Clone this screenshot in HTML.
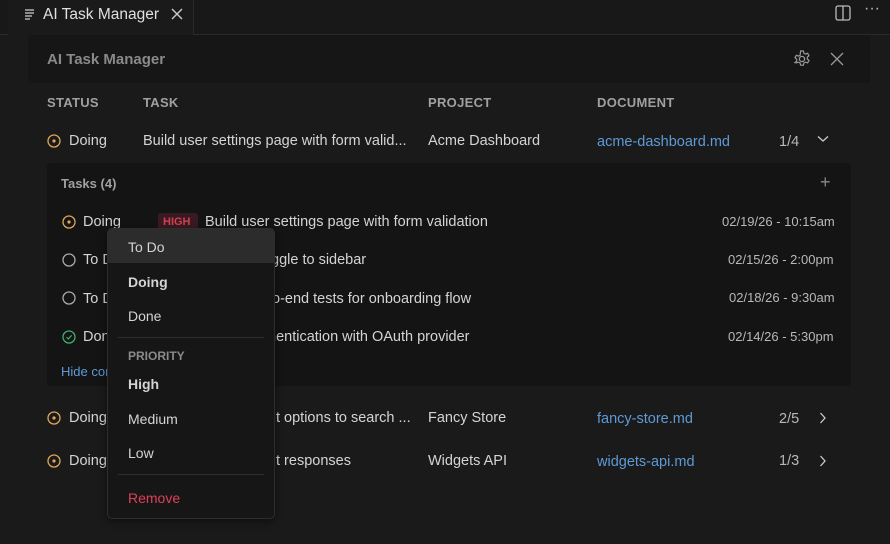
<!DOCTYPE html>
<html><head><style>
*{margin:0;padding:0;box-sizing:border-box}
body{width:890px;height:544px;background:#1a1a1a;font-family:"Liberation Sans",sans-serif;font-size:14.5px;color:#d4d4d4;position:relative;overflow:hidden}
.abs{position:absolute;white-space:nowrap}
.top{position:absolute;left:0;top:0;width:890px;height:35px;background:#181818;border-bottom:1px solid #2a2a2a}
.tab{position:absolute;left:8px;top:0;width:186px;height:35px;background:#1a1a1a;border-right:1px solid #2b2b2b}
.hdr{position:absolute;left:28px;top:35px;width:842px;height:48px;background:#161616}
.th{font-size:13px;font-weight:bold;color:#a0a0a0;letter-spacing:.3px}
.inner{position:absolute;left:47px;top:163px;width:804px;height:223px;background:#141414;border-radius:4px}
.menu{position:absolute;left:107px;top:228px;width:168px;height:291px;background:#161616;border:1px solid #2e2e2e;border-radius:5px;box-shadow:0 2px 8px rgba(0,0,0,.5)}
.mi{position:absolute;left:20px;font-size:14px;color:#d4d4d4}
.sep{position:absolute;left:10px;width:146px;height:1px;background:#2e2e2e}
.link{color:#5e9ad6}
.dim{color:#b8b8b8}
</style></head><body>
<div class="top"></div>
<div class="tab"></div>
<svg class="abs" style="left:24px;top:8px" width="12" height="12" viewBox="0 0 12 12"><g stroke="#c8c8c8" stroke-width="1.3"><line x1="1" y1="2" x2="10" y2="2"/><line x1="1" y1="5" x2="10" y2="5"/><line x1="1" y1="8" x2="8" y2="8"/><line x1="1" y1="11" x2="6" y2="11"/></g></svg>
<div class="abs" style="left:43px;top:6px;font-size:15.5px;color:#e0e0e0">AI Task Manager</div>
<svg class="abs" style="left:171px;top:8px" width="12" height="12"><path d="M1 1L11 11M11 1L1 11" stroke="#ccc" stroke-width="1.4"/></svg>
<svg class="abs" style="left:835px;top:5px" width="16" height="16"><rect x="1" y="1" width="14" height="14" rx="2" fill="none" stroke="#bbb" stroke-width="1.3"/><line x1="8" y1="1" x2="8" y2="15" stroke="#bbb" stroke-width="1.3"/></svg>
<div class="abs" style="left:864px;top:0px;font-size:16px;color:#bbb">···</div>
<div class="hdr"></div>
<div class="abs" style="left:47px;top:51px;font-size:15px;font-weight:bold;color:#8a8a8a">AI Task Manager</div>
<svg class="abs" style="left:792px;top:49px" width="20" height="20" viewBox="0 0 20 20"><circle cx="10" cy="10" r="2.6" fill="none" stroke="#999" stroke-width="1.3"/><path d="M8.6 2h2.8l.5 2.2 1.6.9 2.1-.8 1.4 2.4-1.7 1.5v1.8l1.7 1.5-1.4 2.4-2.1-.8-1.6.9-.5 2.2H8.6l-.5-2.2-1.6-.9-2.1.8L3 13.6l1.7-1.5v-1.8L3 8.7l1.4-2.4 2.1.8 1.6-.9z" fill="none" stroke="#999" stroke-width="1.2"/></svg>
<svg class="abs" style="left:830px;top:52px" width="14" height="14"><path d="M1 1L13 13M13 1L1 13" stroke="#999" stroke-width="1.3"/></svg>

<div class="abs th" style="left:47px;top:95px">STATUS</div>
<div class="abs th" style="left:143px;top:95px">TASK</div>
<div class="abs th" style="left:428px;top:95px">PROJECT</div>
<div class="abs th" style="left:597px;top:95px">DOCUMENT</div>

<svg class="abs" style="left:47px;top:134px" width="14" height="14"><circle cx="7" cy="7" r="6" fill="none" stroke="#e0a55a" stroke-width="1.3"/><circle cx="7" cy="7" r="1.6" fill="#e0a55a"/></svg>
<div class="abs" style="left:69px;top:133px">Doing</div>
<div class="abs" style="left:143px;top:133px">Build user settings page with form valid...</div>
<div class="abs" style="left:428px;top:133px">Acme Dashboard</div>
<div class="abs link" style="left:597px;top:134px">acme-dashboard.md</div>
<div class="abs dim" style="left:779px;top:134px">1/4</div>
<svg class="abs" style="left:817px;top:135px" width="12" height="8"><path d="M1 1.5L6 6L11 1.5" fill="none" stroke="#ccc" stroke-width="1.3"/></svg>

<div class="inner"></div>
<div class="abs" style="left:61px;top:176px;font-size:13px;font-weight:bold;color:#a0a0a0">Tasks (4)</div>
<div class="abs" style="left:820px;top:172px;font-size:18px;color:#888">+</div>

<svg class="abs" style="left:62px;top:215px" width="14" height="14"><circle cx="7" cy="7" r="6" fill="none" stroke="#e0a55a" stroke-width="1.3"/><circle cx="7" cy="7" r="1.6" fill="#e0a55a"/></svg>
<div class="abs" style="left:83px;top:214px">Doing</div>
<div class="abs" style="left:158px;top:213px;width:40px;height:18px;background:#3a1a22;border-radius:3px;color:#d0404f;font-size:11px;font-weight:bold;padding:3px 5px">HIGH</div>
<div class="abs" style="left:205px;top:214px">Build user settings page with form validation</div>
<div class="abs dim" style="left:722px;top:214px;font-size:13px">02/19/26 - 10:15am</div>

<svg class="abs" style="left:62px;top:253px" width="14" height="14"><circle cx="7" cy="7" r="6" fill="none" stroke="#aaa" stroke-width="1.3"/></svg>
<div class="abs" style="left:83px;top:252px">To Do</div>
<div class="abs" style="left:271px;top:252px">ggle to sidebar</div>
<div class="abs dim" style="left:728px;top:252px;font-size:13px">02/15/26 - 2:00pm</div>

<svg class="abs" style="left:62px;top:291px" width="14" height="14"><circle cx="7" cy="7" r="6" fill="none" stroke="#aaa" stroke-width="1.3"/></svg>
<div class="abs" style="left:83px;top:291px">To Do</div>
<div class="abs" style="left:272px;top:291px">o-end tests for onboarding flow</div>
<div class="abs dim" style="left:729px;top:290px;font-size:13px">02/18/26 - 9:30am</div>

<svg class="abs" style="left:62px;top:330px" width="14" height="14"><circle cx="7" cy="7" r="6" fill="none" stroke="#3fae6a" stroke-width="1.3"/><path d="M4.5 7.2L6.3 9L9.6 5.3" fill="none" stroke="#3fae6a" stroke-width="1.2"/></svg>
<div class="abs" style="left:83px;top:329px">Done</div>
<div class="abs" style="left:268px;top:329px">nentication with OAuth provider</div>
<div class="abs dim" style="left:728px;top:329px;font-size:13px">02/14/26 - 5:30pm</div>

<div class="abs link" style="left:61px;top:364px;font-size:13px">Hide completed</div>

<svg class="abs" style="left:47px;top:411px" width="14" height="14"><circle cx="7" cy="7" r="6" fill="none" stroke="#e0a55a" stroke-width="1.3"/><circle cx="7" cy="7" r="1.6" fill="#e0a55a"/></svg>
<div class="abs" style="left:69px;top:410px">Doing</div>
<div class="abs" style="left:276px;top:410px">t options to search ...</div>
<div class="abs" style="left:428px;top:410px">Fancy Store</div>
<div class="abs link" style="left:597px;top:411px">fancy-store.md</div>
<div class="abs dim" style="left:779px;top:411px">2/5</div>
<svg class="abs" style="left:819px;top:412px" width="8" height="12"><path d="M1.5 1L6 6L1.5 11" fill="none" stroke="#ccc" stroke-width="1.3"/></svg>

<svg class="abs" style="left:47px;top:454px" width="14" height="14"><circle cx="7" cy="7" r="6" fill="none" stroke="#e0a55a" stroke-width="1.3"/><circle cx="7" cy="7" r="1.6" fill="#e0a55a"/></svg>
<div class="abs" style="left:69px;top:453px">Doing</div>
<div class="abs" style="left:276px;top:453px">t responses</div>
<div class="abs" style="left:428px;top:453px">Widgets API</div>
<div class="abs link" style="left:597px;top:454px">widgets-api.md</div>
<div class="abs dim" style="left:779px;top:453px">1/3</div>
<svg class="abs" style="left:819px;top:455px" width="8" height="12"><path d="M1.5 1L6 6L1.5 11" fill="none" stroke="#ccc" stroke-width="1.3"/></svg>

<div class="menu">
<div style="position:absolute;left:0;top:0;width:166px;height:34px;background:#2c2c2c;border-radius:4px 4px 0 0"></div>
<div class="mi" style="top:10px">To Do</div>
<div class="mi" style="top:45px;font-weight:bold">Doing</div>
<div class="mi" style="top:79px">Done</div>
<div class="sep" style="top:108px"></div>
<div class="mi" style="top:120px;font-size:12px;font-weight:bold;color:#8a8a8a">PRIORITY</div>
<div class="mi" style="top:147px;font-weight:bold">High</div>
<div class="mi" style="top:182px">Medium</div>
<div class="mi" style="top:216px">Low</div>
<div class="sep" style="top:245px"></div>
<div class="mi" style="top:261px;color:#e0405a">Remove</div>
</div>
</body></html>
